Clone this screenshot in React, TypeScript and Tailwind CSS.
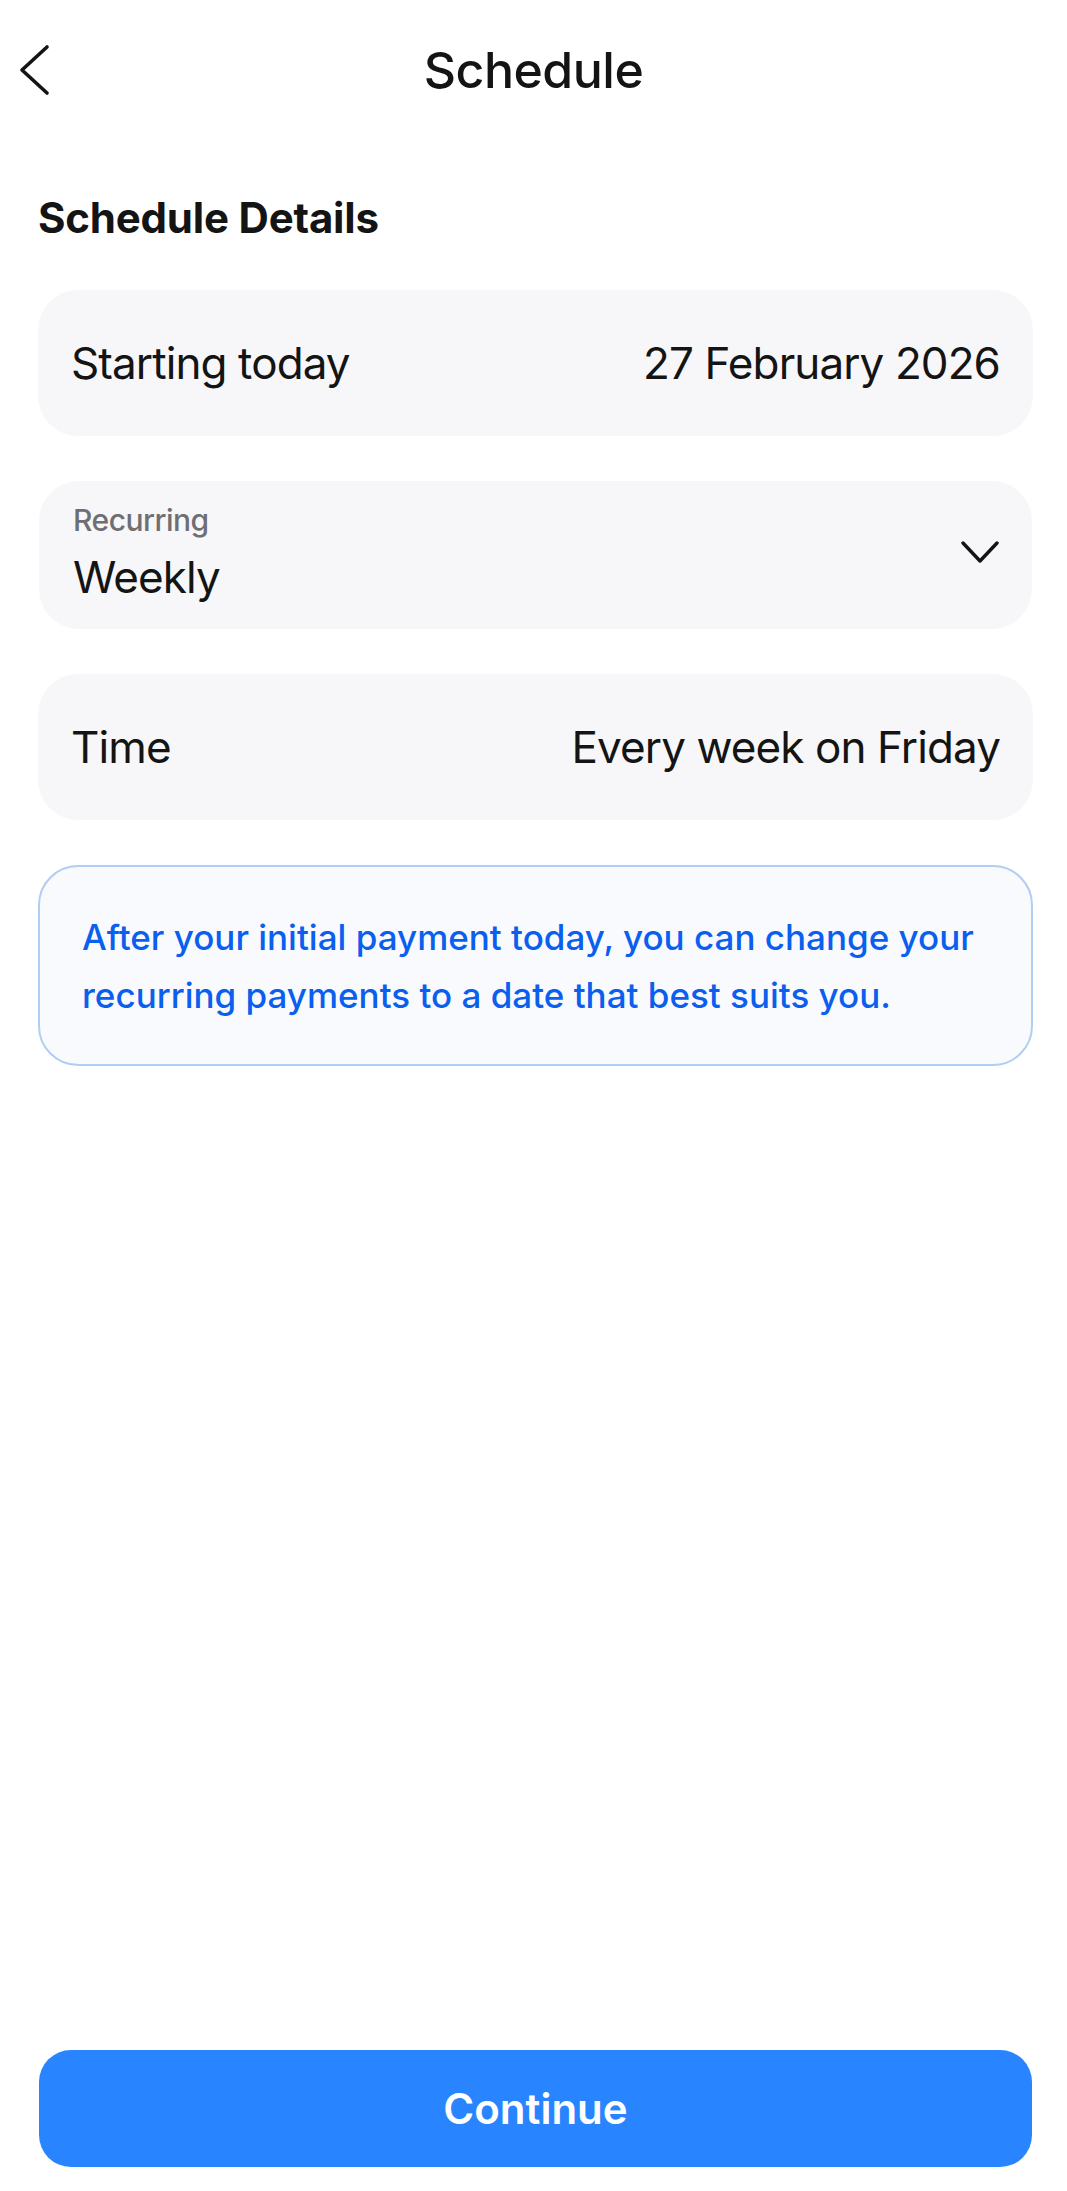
const font = { fontFamily: 'Inter, "Noto Sans", sans-serif' }

export default function App() {
  return (
    <div className="w-[1067px] h-[2191px] bg-white flex flex-col text-[#141414]" style={font}>
      <header className="h-[140px] grid grid-cols-[1fr_auto_1fr] items-center">
        <button className="pl-[19px] flex items-center">
          <svg width="32" height="52" viewBox="0 0 32 52" fill="none">
            <path d="M28 3 L3 26 L28 49" stroke="#141414" strokeWidth="3.6" strokeLinecap="round" strokeLinejoin="round" />
          </svg>
        </button>
        <h1 className="text-[50px] leading-[60px] font-medium tracking-[-0.5px]">Schedule</h1>
        <div />
      </header>

      <main className="flex-1 pl-[38px] pr-[34px] pt-[53px] flex flex-col">
        <h2 className="text-[42px] leading-[50px] font-bold tracking-[-0.2px]">Schedule Details</h2>

        <div className="mt-[47px] flex flex-col gap-[45px]">
          <Row label="Starting today" value="27 February 2026" />

          <div className="h-[148px] rounded-[40px] bg-[#f7f7f9] mx-px pl-[34px] pr-[33px] flex items-center justify-between">
            <div className="flex flex-col pb-[6px]">
              <span className="text-[30px] leading-[36px] font-medium text-[#6e6e73] tracking-[-0.5px]">Recurring</span>
              <span className="mt-[13px] text-[44px] leading-[52px] tracking-[-0.9px]">Weekly</span>
            </div>
            <svg width="38" height="24" viewBox="0 0 38 24" fill="none" className="mb-[6px]">
              <path d="M2 3 L19 21 L36 3" stroke="#141414" strokeWidth="3.4" strokeLinecap="round" strokeLinejoin="round" />
            </svg>
          </div>

          <Row label="Time" value="Every week on Friday" />

          <div className="rounded-[40px] border-2 border-[#b0cdf3] bg-[#f9fafd] pl-[42px] pr-[30px] pt-[41px] pb-[40px]">
            <p className="text-[35px] leading-[58px] font-medium text-[#0a5fee]">
              After your initial payment today, you can change your recurring payments to a date that best suits you.
            </p>
          </div>
        </div>

        <div className="flex-1" />

        <button className="mb-[24px] h-[117px] mx-px rounded-[32px] bg-[#2985ff] text-white text-[42px] font-semibold">
          Continue
        </button>
      </main>
    </div>
  )
}

function Row({ label, value }: { label: string; value: string }) {
  return (
    <div className="h-[146px] rounded-[40px] bg-[#f7f7f9] px-[33px] flex items-center justify-between text-[44px] leading-[52px] tracking-[-0.9px]">
      <span>{label}</span>
      <span>{value}</span>
    </div>
  )
}
